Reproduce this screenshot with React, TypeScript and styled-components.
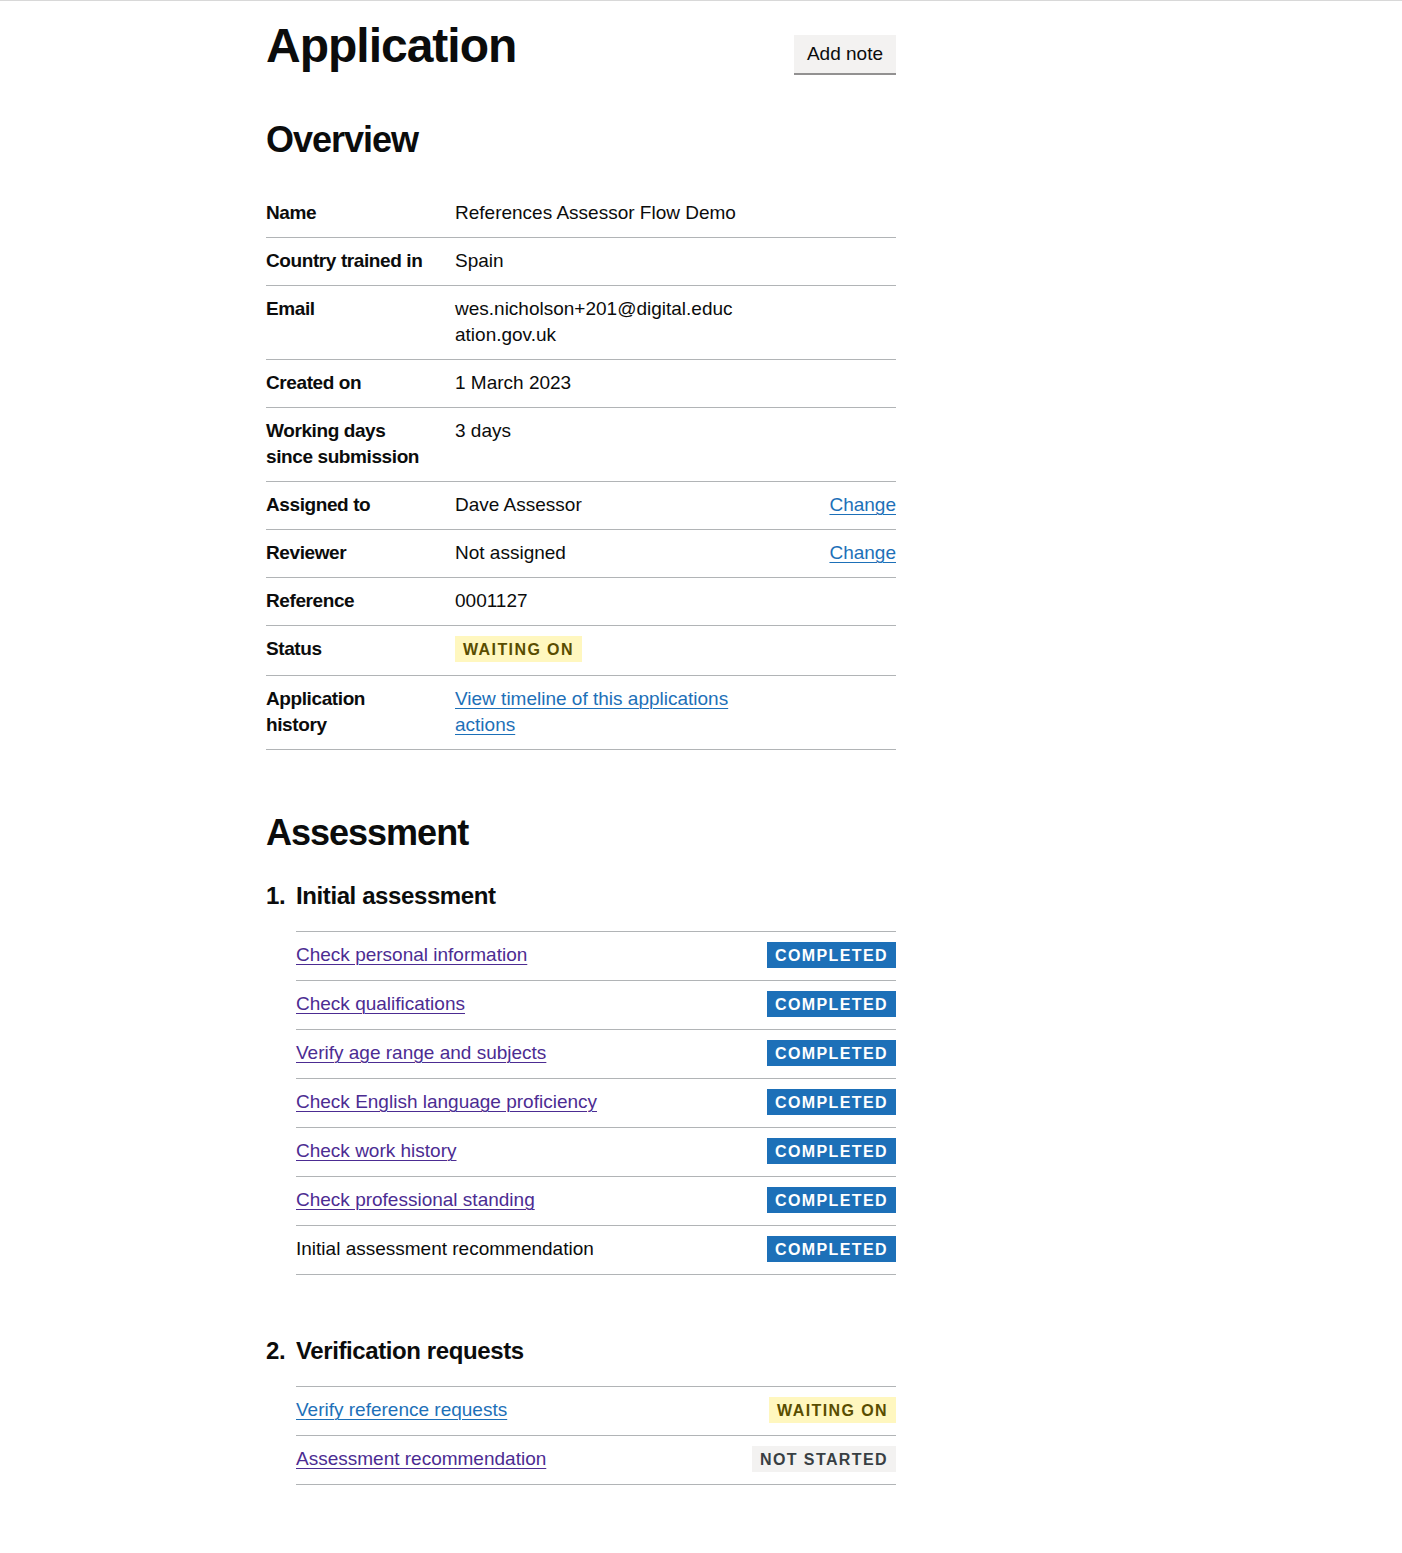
import React from "react";
import styled, { createGlobalStyle, css } from "styled-components";

const GlobalStyle = createGlobalStyle`
  html, body {
    margin: 0;
    background: #fff;
  }
  body {
    font-family: "Liberation Sans", Arial, sans-serif;
    color: #0b0c0c;
    font-size: 19px;
    line-height: 26px;
    border-top: 1px solid #d8d8d8;
  }
`;

const Main = styled.main`
  width: 630px;
  margin-left: 266px;
  padding: 20px 0 68px;
`;

const Header = styled.div`
  display: flex;
  justify-content: space-between;
  align-items: flex-start;
  margin-bottom: 47px;
`;

const Title = styled.h1`
  margin: 0;
  font-size: 48px;
  line-height: 50px;
  font-weight: 700;
  letter-spacing: -1px;
`;

const Button = styled.button`
  margin-top: 14px;
  padding: 7px 11px 7px;
  border: 2px solid transparent;
  border-radius: 0;
  background: #f3f2f1;
  box-shadow: 0 2px 0 #929191;
  color: #0b0c0c;
  font: 400 19px/20px "Liberation Sans", Arial, sans-serif;
  cursor: pointer;
`;

const SectionTitle = styled.h2<{ $gap?: number }>`
  margin: 0 0 ${(p) => p.$gap ?? 30}px;
  font-size: 36px;
  line-height: 40px;
  font-weight: 700;
  letter-spacing: -1px;
`;

const SummaryList = styled.dl`
  margin: 0 0 63px;
`;

const SummaryRow = styled.div`
  display: grid;
  grid-template-columns: 189px 304px 1fr;
  padding: 10px 0 11px;
  border-bottom: 1px solid #b1b4b6;
`;

const Key = styled.dt`
  margin: 0;
  padding-right: 20px;
  font-weight: 700;
  letter-spacing: -0.4px;
  white-space: nowrap;
`;

const Value = styled.dd`
  margin: 0;
  padding-right: 20px;
  overflow-wrap: break-word;
  word-break: break-word;
`;

const Actions = styled.dd`
  margin: 0;
  text-align: right;
`;

const Link = styled.a<{ $visited?: boolean }>`
  color: ${(p) => (p.$visited ? "#4c2c92" : "#1d70b8")};
  text-decoration: underline;
  text-decoration-thickness: 1px;
  text-underline-offset: 3px;
`;

type TagKind = "completed" | "waiting" | "notStarted";

const tagColours: Record<TagKind, ReturnType<typeof css>> = {
  completed: css`
    background: #1d70b8;
    color: #fff;
  `,
  waiting: css`
    background: #fff7bf;
    color: #594d00;
  `,
  notStarted: css`
    background: #f3f2f1;
    color: #383f43;
  `,
};

const Tag = styled.strong<{ $kind: TagKind }>`
  display: inline-block;
  vertical-align: top;
  padding: 5px 8px 4px;
  font-size: 16px;
  line-height: 17px;
  font-weight: 700;
  letter-spacing: 1.4px;
  text-transform: uppercase;
  ${(p) => tagColours[p.$kind]}
`;

const StatusTag = styled(Tag)`
  margin-bottom: 2px;
`;

const TaskSection = styled.li`
  margin-bottom: 61px;
`;

const TaskSections = styled.ol`
  list-style: none;
  margin: 0;
  padding: 0;
`;

const TaskHeading = styled.h3`
  display: flex;
  margin: 0 0 20px;
  font-size: 24px;
  line-height: 30px;
  font-weight: 700;
  letter-spacing: -0.4px;
`;

const TaskNumber = styled.span`
  min-width: 30px;
`;

const TaskItems = styled.ul`
  list-style: none;
  margin: 0 0 0 30px;
  padding: 0;
  border-top: 1px solid #b1b4b6;
`;

const TaskItem = styled.li`
  display: flex;
  justify-content: space-between;
  align-items: center;
  padding: 10px 0 12px;
  border-bottom: 1px solid #b1b4b6;
  line-height: 26px;
`;

type Task = { label: string; status: TagKind; link?: "visited" | "new" };

const statusText: Record<TagKind, string> = {
  completed: "Completed",
  waiting: "Waiting on",
  notStarted: "Not started",
};

const sections: { title: string; tasks: Task[] }[] = [
  {
    title: "Initial assessment",
    tasks: [
      { label: "Check personal information", status: "completed", link: "visited" },
      { label: "Check qualifications", status: "completed", link: "visited" },
      { label: "Verify age range and subjects", status: "completed", link: "visited" },
      { label: "Check English language proficiency", status: "completed", link: "visited" },
      { label: "Check work history", status: "completed", link: "visited" },
      { label: "Check professional standing", status: "completed", link: "visited" },
      { label: "Initial assessment recommendation", status: "completed" },
    ],
  },
  {
    title: "Verification requests",
    tasks: [
      { label: "Verify reference requests", status: "waiting", link: "new" },
      { label: "Assessment recommendation", status: "notStarted", link: "visited" },
    ],
  },
];

export default function App() {
  return (
    <>
      <GlobalStyle />
      <Main>
        <Header>
          <Title>Application</Title>
          <Button type="button">Add note</Button>
        </Header>

        <SectionTitle>Overview</SectionTitle>
        <SummaryList>
          <SummaryRow>
            <Key>Name</Key>
            <Value>References Assessor Flow Demo</Value>
          </SummaryRow>
          <SummaryRow>
            <Key>Country trained in</Key>
            <Value>Spain</Value>
          </SummaryRow>
          <SummaryRow>
            <Key>Email</Key>
            <Value>wes.nicholson+201@digital.education.gov.uk</Value>
          </SummaryRow>
          <SummaryRow>
            <Key>Created on</Key>
            <Value>1 March 2023</Value>
          </SummaryRow>
          <SummaryRow>
            <Key>
              Working days
              <br />
              since submission
            </Key>
            <Value>3 days</Value>
          </SummaryRow>
          <SummaryRow>
            <Key>Assigned to</Key>
            <Value>Dave Assessor</Value>
            <Actions>
              <Link href="#">Change</Link>
            </Actions>
          </SummaryRow>
          <SummaryRow>
            <Key>Reviewer</Key>
            <Value>Not assigned</Value>
            <Actions>
              <Link href="#">Change</Link>
            </Actions>
          </SummaryRow>
          <SummaryRow>
            <Key>Reference</Key>
            <Value>0001127</Value>
          </SummaryRow>
          <SummaryRow>
            <Key>Status</Key>
            <Value>
              <StatusTag $kind="waiting">Waiting on</StatusTag>
            </Value>
          </SummaryRow>
          <SummaryRow>
            <Key>
              Application
              <br />
              history
            </Key>
            <Value>
              <Link href="#">View timeline of this applications actions</Link>
            </Value>
          </SummaryRow>
        </SummaryList>

        <SectionTitle $gap={28}>Assessment</SectionTitle>
        <TaskSections>
          {sections.map((section, i) => (
            <TaskSection key={section.title}>
              <TaskHeading>
                <TaskNumber>{i + 1}.</TaskNumber>
                {section.title}
              </TaskHeading>
              <TaskItems>
                {section.tasks.map((task) => (
                  <TaskItem key={task.label}>
                    {task.link ? (
                      <Link href="#" $visited={task.link === "visited"}>
                        {task.label}
                      </Link>
                    ) : (
                      <span>{task.label}</span>
                    )}
                    <Tag $kind={task.status}>{statusText[task.status]}</Tag>
                  </TaskItem>
                ))}
              </TaskItems>
            </TaskSection>
          ))}
        </TaskSections>
      </Main>
    </>
  );
}
